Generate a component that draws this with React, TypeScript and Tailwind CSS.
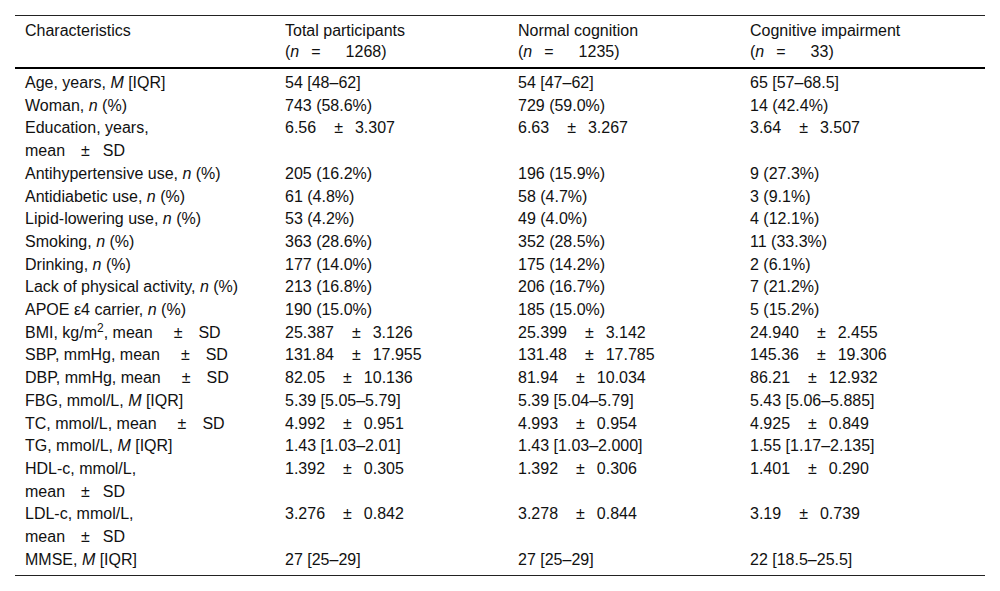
import type { ReactNode } from "react";

const PM = ({ a, b }: { a: string; b: string }) => (
  <>
    {a}
    <span className="ml-[18px] mr-[12px]">±</span>
    {b}
  </>
);

const MeanSD = ({ wide }: { wide?: boolean }) =>
  wide ? (
    <>
      mean<span className="ml-[21px] mr-[16px]">±</span>SD
    </>
  ) : (
    <>
      mean<span className="ml-[16px] mr-[13px]">±</span>SD
    </>
  );

const N = () => <i>n</i>;
const M = () => <i>M</i>;

type Row = [ReactNode, ReactNode, ReactNode, ReactNode];

const rows: Row[] = [
  [<>Age, years, <M /> [IQR]</>, "54 [48–62]", "54 [47–62]", "65 [57–68.5]"],
  [<>Woman, <N /> (%)</>, "743 (58.6%)", "729 (59.0%)", "14 (42.4%)"],
  [
    <>Education, years,<br /><MeanSD /></>,
    <PM a="6.56" b="3.307" />,
    <PM a="6.63" b="3.267" />,
    <PM a="3.64" b="3.507" />,
  ],
  [<>Antihypertensive use, <N /> (%)</>, "205 (16.2%)", "196 (15.9%)", "9 (27.3%)"],
  [<>Antidiabetic use, <N /> (%)</>, "61 (4.8%)", "58 (4.7%)", "3 (9.1%)"],
  [<>Lipid-lowering use, <N /> (%)</>, "53 (4.2%)", "49 (4.0%)", "4 (12.1%)"],
  [<>Smoking, <N /> (%)</>, "363 (28.6%)", "352 (28.5%)", "11 (33.3%)"],
  [<>Drinking, <N /> (%)</>, "177 (14.0%)", "175 (14.2%)", "2 (6.1%)"],
  [<>Lack of physical activity, <N /> (%)</>, "213 (16.8%)", "206 (16.7%)", "7 (21.2%)"],
  [<>APOE ε4 carrier, <N /> (%)</>, "190 (15.0%)", "185 (15.0%)", "5 (15.2%)"],
  [
    <>BMI, kg/m<sup>2</sup>, <MeanSD wide /></>,
    <PM a="25.387" b="3.126" />,
    <PM a="25.399" b="3.142" />,
    <PM a="24.940" b="2.455" />,
  ],
  [
    <>SBP, mmHg, <MeanSD wide /></>,
    <PM a="131.84" b="17.955" />,
    <PM a="131.48" b="17.785" />,
    <PM a="145.36" b="19.306" />,
  ],
  [
    <>DBP, mmHg, <MeanSD wide /></>,
    <PM a="82.05" b="10.136" />,
    <PM a="81.94" b="10.034" />,
    <PM a="86.21" b="12.932" />,
  ],
  [<>FBG, mmol/L, <M /> [IQR]</>, "5.39 [5.05–5.79]", "5.39 [5.04–5.79]", "5.43 [5.06–5.885]"],
  [
    <>TC, mmol/L, <MeanSD wide /></>,
    <PM a="4.992" b="0.951" />,
    <PM a="4.993" b="0.954" />,
    <PM a="4.925" b="0.849" />,
  ],
  [<>TG, mmol/L, <M /> [IQR]</>, "1.43 [1.03–2.01]", "1.43 [1.03–2.000]", "1.55 [1.17–2.135]"],
  [
    <>HDL-c, mmol/L,<br /><MeanSD /></>,
    <PM a="1.392" b="0.305" />,
    <PM a="1.392" b="0.306" />,
    <PM a="1.401" b="0.290" />,
  ],
  [
    <>LDL-c, mmol/L,<br /><MeanSD /></>,
    <PM a="3.276" b="0.842" />,
    <PM a="3.278" b="0.844" />,
    <PM a="3.19" b="0.739" />,
  ],
  [<>MMSE, <M /> [IQR]</>, "27 [25–29]", "27 [25–29]", "22 [18.5–25.5]"],
];

const headers: [string, string][] = [
  ["Total participants", "1268"],
  ["Normal cognition", "1235"],
  ["Cognitive impairment", "33"],
];

export default function App() {
  return (
    <div className="min-h-[591px] w-[1000px] bg-white px-[15px] pt-[15px] font-['Liberation_Sans',Arial,sans-serif] text-[16px] leading-[22.7px] text-[#111]">
      <table className="w-[970px] table-fixed border-collapse">
        <colgroup>
          <col className="w-[260px]" />
          <col className="w-[233px]" />
          <col className="w-[232px]" />
          <col className="w-[245px]" />
        </colgroup>
        <thead>
          <tr className="border-t border-b-2 border-t-[#222] border-b-black">
            <th className="pt-[4px] pb-[5px] pl-[10px] text-left align-top font-normal leading-[21px]">
              Characteristics
            </th>
            {headers.map(([title, n]) => (
              <th
                key={title}
                className="pt-[4px] pb-[5px] pl-[10px] text-left align-top font-normal leading-[21px]"
              >
                {title}
                <br />(<N />
                <span className="ml-[12px] mr-[25px]">=</span>
                {n})
              </th>
            ))}
          </tr>
        </thead>
        <tbody>
          {rows.map((row, i) => {
            const pad =
              i === 0 ? "pt-[3px]" : i === rows.length - 1 ? "pb-[4px]" : "";
            return (
              <tr key={i} className={i === rows.length - 1 ? "border-b border-b-[#222]" : ""}>
                {row.map((cell, j) => (
                  <td key={j} className={`pl-[10px] align-top ${pad}`}>
                    {cell}
                  </td>
                ))}
              </tr>
            );
          })}
        </tbody>
      </table>
    </div>
  );
}
